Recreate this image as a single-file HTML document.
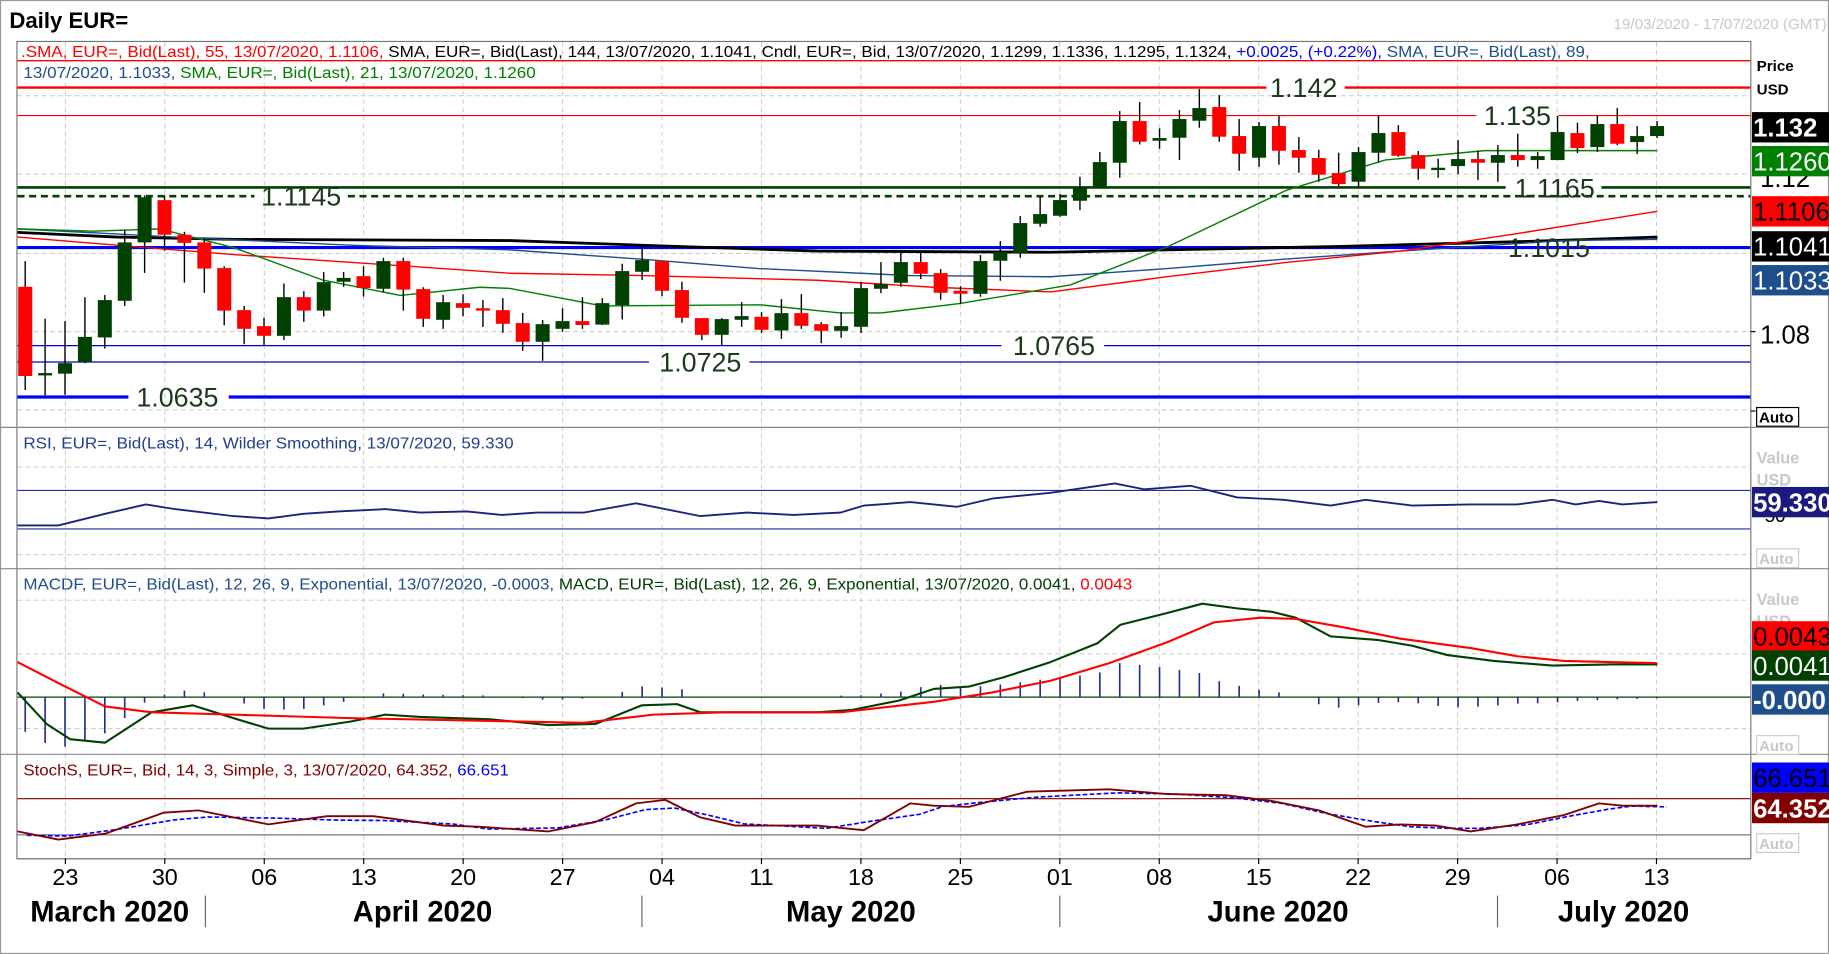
<!DOCTYPE html>
<html><head><meta charset="utf-8"><style>
html,body{margin:0;padding:0;background:#fff;overflow:hidden}
svg{display:block}
text{font-family:"Liberation Sans",sans-serif}
</style></head><body>
<svg id="s" width="1829" height="954" viewBox="0 0 1567 817" preserveAspectRatio="none" xmlns="http://www.w3.org/2000/svg">
<rect x="0" y="0" width="1567" height="817" fill="#fff"/>
<rect x="0.5" y="0.5" width="1566" height="816" fill="none" stroke="#9a9a9a"/>
<text x="8" y="24" font-size="19" font-weight="bold">Daily EUR=</text>
<text x="1565" y="25" font-size="13" fill="#c8c8c8" text-anchor="end">19/03/2020 - 17/07/2020 (GMT)</text>
<g id="grid"></g>
<g id="hl"></g>
<g id="ma"></g>
<g id="candles"></g>
<g id="lbl"></g>
<text x="18" y="49" font-size="13.5" textLength="1344" lengthAdjust="spacingAndGlyphs"><tspan fill="#ff0000">.SMA, EUR=, Bid(Last),  55, 13/07/2020, 1.1106, </tspan><tspan fill="#000">SMA, EUR=, Bid(Last),  144, 13/07/2020, 1.1041, Cndl, EUR=, Bid, 13/07/2020, 1.1299, 1.1336, 1.1295, 1.1324, </tspan><tspan fill="#0000ff">+0.0025, (+0.22%), </tspan><tspan fill="#1f4e8c">SMA, EUR=, Bid(Last),  89,</tspan></text>
<text x="20" y="67" font-size="13.5" textLength="439" lengthAdjust="spacingAndGlyphs"><tspan fill="#1f4e8c">13/07/2020, 1.1033, </tspan><tspan fill="#008000">SMA, EUR=, Bid(Last),  21, 13/07/2020, 1.1260</tspan></text>
<text x="20" y="384" font-size="13.5" fill="#1f3f8c" textLength="420" lengthAdjust="spacingAndGlyphs">RSI, EUR=, Bid(Last),  14, Wilder Smoothing, 13/07/2020, 59.330</text>
<text x="20" y="505" font-size="13.5" textLength="950" lengthAdjust="spacingAndGlyphs"><tspan fill="#1f4e8c">MACDF, EUR=, Bid(Last),  12, 26, 9, Exponential, 13/07/2020, -0.0003, </tspan><tspan fill="#004000">MACD, EUR=, Bid(Last),  12, 26, 9, Exponential, 13/07/2020, 0.0041, </tspan><tspan fill="#ff0000">0.0043</tspan></text>
<text x="20" y="664" font-size="13.5" textLength="416" lengthAdjust="spacingAndGlyphs"><tspan fill="#800000">StochS, EUR=, Bid,  14, 3, Simple, 3, 13/07/2020, 64.352, </tspan><tspan fill="#0000ff">66.651</tspan></text>
<g id="frame"></g>
<g id="axis"></g>
</svg>
<script>
var NS="http://www.w3.org/2000/svg";
function el(p,t,a,txt){var e=document.createElementNS(NS,t);for(var k in a)e.setAttribute(k,a[k]);if(txt!==undefined)e.textContent=txt;document.getElementById(p).appendChild(e);return e;}
function line(p,x1,y1,x2,y2,c,w,d){var a={x1:x1,y1:y1,x2:x2,y2:y2,stroke:c,"stroke-width":w};if(d)a["stroke-dasharray"]=d;return el(p,"line",a);}
function poly(p,pts,c,w,d){var a={points:pts.map(function(q){return q.join(",")}).join(" "),fill:"none",stroke:c,"stroke-width":w,"stroke-linejoin":"round"};if(d)a["stroke-dasharray"]=d;el(p,"polyline",a);}
function interp(pts,x){if(x<=pts[0][0])return pts[0][1];for(var i=1;i<pts.length;i++){if(x<=pts[i][0]){var a=pts[i-1],b=pts[i];return a[1]+(b[1]-a[1])*(x-a[0])/(b[0]-a[0]);}}return pts[pts.length-1][1];}
var L=15,R=1500;
var gx=[];for(var i=0;i<17;i++)gx.push(56+85.2*i);
gx.forEach(function(x){line("grid",x,36,x,735,"#c8c8c8",0.8,"4,3");});
[82,149,217,284,351].forEach(function(y){line("grid",L,y,R,y,"#c8c8c8",0.8,"4,3");});
[400,475].forEach(function(y){line("grid",L,y,R,y,"#c8c8c8",0.8,"4,3");});
[514,560,624].forEach(function(y){line("grid",L,y,R,y,"#c8c8c8",0.8,"4,3");});
line("hl",L,52,R,52,"#ff0000",1.2);
line("hl",L,75,1085,75,"#ff0000",2);line("hl",1152,75,R,75,"#ff0000",2);
line("hl",L,99,1265,99,"#ff0000",1);line("hl",1335,99,R,99,"#ff0000",1);
line("hl",L,160.5,1290,160.5,"#004000",2.2);line("hl",1372,160.5,R,160.5,"#004000",2.2);
line("hl",L,168,218,168,"#004000",2.2,"6,4");line("hl",298,168,R,168,"#004000",2.2,"6,4");
line("hl",L,212,R,212,"#0000ff",2.6);
line("hl",L,296,858,296,"#0000cc",1.1);line("hl",946,296,R,296,"#0000cc",1.1);
line("hl",L,310,556,310,"#0000cc",1.1);line("hl",642,310,R,310,"#0000cc",1.1);
line("hl",L,340,110,340,"#0000ff",2.8);line("hl",196,340,R,340,"#0000ff",2.8);
var black=[[15,199],[100,203],[200,205],[437,206],[550,210],[700,215],[900,216],[1000,214],[1150,211],[1300,207],[1420,203]];
var blue=[[15,196],[150,203],[300,210],[437,214],[550,222],[650,230],[780,236],[900,237],[1000,230],[1100,222],[1200,215],[1340,206],[1420,205]];
var red=[[15,203],[100,210],[200,218],[350,228],[437,234],[550,236],[700,240],[800,246],[900,250],[1000,237],[1100,225],[1200,215],[1300,200],[1420,181]];
var green=[[15,196],[80,198],[137,196],[200,212],[277,240],[343,253],[411,246],[437,247],[516,262],[651,261],[720,268],[755,268],[822,260],[917,244],[1001,211],[1102,163],[1187,137],[1272,129],[1420,129]];
poly("ma",black,"#000",2.4);poly("ma",blue,"#1f4e8c",1.2);poly("ma",red,"#ff0000",1.2);poly("ma",green,"#008000",1.2);
var A=[[245.6,322,223.6,334,0],[319.5,321,273,338.5,1],[311,320,275,338,1],[288.5,310,254.5,311,1],[257,289,252.6,298.5,1],[207.6,257.6,197,262,1],[169,207.6,167.5,233.7,1],[171.4,201,167.5,214.8,0],[201,208,198.5,242,0],[207.6,230,204,250.8,0],[229.6,266,228,278.5,0],[265.6,281.6,262,294.7,0],[279.3,287.6,272,295.6,0],[254.5,287.6,242.8,291.3,1],[254.5,266,249.3,275.6,0],[241.6,266,233,271,1],[238,241.3,233,245.6,1],[236.5,246.6,228,254,0],[223.6,247.3,220.8,250,1],[223.6,248,220.8,266,0],[247.6,273,246,280,0],[258.8,273.9,252.6,281.6,1],[259.6,263.6,252,271,0],[264,266,257,280,0],[265.6,277.3,255.3,285,0],[276.7,292.7,268,300.5,0],[277.6,292.7,274,309,1],[275,281.6,264,284,1],[275,278.3,254.5,281.6,0],[259.6,278,255.3,278.4,1]];
var Z4=[[273,375,251,418,1],[240,275,203,300,1],[243,332,243,348,0],[330,413,305,428,0],[414,464,414,480,0],[417,464,414,495,1],[408,419,366,440,1],[410,449,396,459,0],[399,451,357,476,1],[399,437,342,446,0],[432,452,426,489,0],[438,452,396,473,1],[324,440,306,459,1],[312,326,246,339,1],[246,308,216,320,1],[246,281,212,297,0],[279,338,267,359,0],[332,341,318,371,0],[243,341,225,350,1],[216,242,183,302,1],[129,219,108,233,1],[102,131,50,140,1],[60,107,42,110,1]];
Z4.forEach(function(c){A.push([c[0]*0.2856+154.2,c[1]*0.2856+154.2,c[2]*0.2856+154.2,c[3]*0.2856+154.2,c[4]]);});
var Z5=[[325,362,290,390,1],[246,325,216,325,1],[123,248,93,293,1],[123,185,66,193,0],[174,182,145,206,1],[117,173,90,240,1],[84,122,27,143,1],[81,170,45,185,0],[168,221,117,272,0],[138,233,126,260,1],[138,212,108,254,0],[210,233,171,278,0],[234,284,209,305,0],[279,312,218,318,0],[216,305,201,321,1],[159,218,107,248,1],[156,227,135,230,0],[225,266,213,299,0],[263,266,236,293,1],[237,258,180,282,1],[237,248,212,300,0],[225,248,195,305,1],[225,240,161,260,0],[228,240,216,266,1],[156,240,108,240,1],[159,204,128,219,0],[132,201,105,216,1],[132,191,84,195,0],[168,186,138,222,1],[138,168,123,174,1]];
Z5.forEach(function(c){A.push([c[0]*0.2856+68.54,c[1]*0.2856+68.54,c[2]*0.2856+68.54,c[3]*0.2856+68.54,c[4]]);});
var CX=[];
A.forEach(function(c,k){var x=21.6+17.05*k;CX.push(x);var col=c[4]?"#004000":"#ff0000";
line("candles",x,c[2],x,c[3],"#000",1.2);
var h=Math.max(c[1]-c[0],2);el("candles","rect",{x:x-6,y:c[0],width:12,height:h,fill:col});});
function lab(x,y,t){el("lbl","text",{x:x,y:y+8,"font-size":23,fill:"#1a3a1a","text-anchor":"middle"},t);}
lab(1117,75,"1.142");lab(1300,99,"1.135");lab(258,168,"1.1145");lab(1332,161,"1.1165");lab(1327,212,"1.1015");lab(903,296,"1.0765");lab(600,310,"1.0725");lab(152,340,"1.0635");
line("hl",L,420,R,420,"#1f2f9c",1);line("hl",L,453,R,453,"#1f2f9c",1);
var rsi=[[15,450],[50,450],[90,440],[125,432],[150,436],[200,442],[230,444],[260,440],[290,438],[330,436],[360,439],[400,438],[430,441],[460,439],[500,439],[545,431],[600,442],[640,439],[680,441],[720,439],[740,433],[780,430],[820,434],[850,427],[900,422],[955,414],[980,419],[1020,416],[1060,426],[1100,428],[1140,433],[1170,428],[1210,433],[1260,432],[1300,432],[1330,428],[1350,432],[1370,429],[1390,432],[1420,430]];
poly("ma",rsi,"#1a237e",1.6);
var mg=[[15,593],[40,620],[60,633],[90,636],[130,610],[165,604],[200,615],[230,624],[260,624],[300,618],[330,612],[360,614],[420,616],[470,621],[510,620],[550,604],[580,603],[600,610],[700,610],[730,608],[770,600],[800,590],[830,588],[860,580],[900,567],[940,551],[960,535],[1000,525],[1030,517],[1060,521],[1090,524],[1110,529],[1140,545],[1180,548],[1210,553],[1240,561],[1280,566],[1330,570],[1380,569],[1420,569]];
var mr=[[15,567],[50,585],[90,605],[130,610],[200,612],[300,615],[400,617],[500,619],[560,612],[620,610],[720,610],[800,601],[850,593],[900,583],[950,568],[1000,550],[1040,533],[1080,529],[1110,530],[1150,537],[1200,547],[1260,555],[1300,562],[1340,566],[1420,568]];
line("hl",L,597,R,597,"#004000",1);
CX.forEach(function(x){var v=597+(interp(mg,x)-interp(mr,x));v=Math.max(v,560);if(Math.abs(v-597)>0.8)line("ma",x,597,x,v,"#1f2f8c",1.4);});
poly("ma",mg,"#004000",1.8);poly("ma",mr,"#ff0000",1.8);
line("hl",L,684,R,684,"#800000",1);line("hl",L,715,R,715,"#555",0.8);
var st=[[15,712],[50,719],[90,714],[140,696],[170,694],[230,706],[280,699],[320,699],[380,707],[410,708],[470,712],[510,704],[545,688],[570,685],[600,700],[630,707],[700,707],[740,711],[780,688],[800,690],[830,691],[880,678],[950,676],[1000,680],[1050,681],[1090,686],[1130,694],[1170,708],[1200,706],[1230,707],[1260,712],[1300,706],[1340,698],[1370,688],[1390,690],[1420,690]];
var sd=st.map(function(p,i){var a=st[Math.max(0,i-1)][1],b=p[1],c=st[Math.min(st.length-1,i+1)][1];return[p[0]+8,(a+b+c)/3+1];});
poly("ma",sd,"#0000ff",1.4,"4,2");poly("ma",st,"#800000",1.6);
el("frame","rect",{x:14.5,y:35.5,width:1485.5,height:700,fill:"none",stroke:"#777","stroke-width":1});
[366,487,646].forEach(function(y){line("frame",0,y,1567,y,"#888",1);});
line("frame",L,735.5,1500,735.5,"#777",1);
function box(y,bg,fg,t,b){el("axis","rect",{x:1501,y:y-13,width:66,height:26,fill:bg});el("axis","text",{x:1502,y:y+8,"font-size":22,fill:fg,"font-weight":b?"bold":"normal"},t);}
el("axis","text",{x:1505,y:61,"font-size":13,"font-weight":"bold"},"Price");
el("axis","text",{x:1505,y:81,"font-size":13,"font-weight":"bold"},"USD");
el("axis","text",{x:1508,y:160,"font-size":22},"1.12");
box(109,"#000","#fff","1.132",true);box(138,"#008000","#fff","1.1260");box(181,"#ff0000","#000","1.1106");box(211,"#000","#fff","1.1041");box(240,"#1f4e8c","#fff","1.1033");
line("axis",1500,284,1504,284,"#000",1);
el("axis","text",{x:1508,y:294,"font-size":22},"1.08");
line("axis",1500,352,1504,352,"#000",1);
el("axis","rect",{x:1505,y:349,width:36,height:16,fill:"#fff",stroke:"#000"});
el("axis","text",{x:1507,y:362,"font-size":13,"font-weight":"bold"},"Auto");
el("axis","text",{x:1505,y:397,"font-size":14,fill:"#c8c8c8","font-weight":"bold"},"Value");
el("axis","text",{x:1505,y:416,"font-size":14,fill:"#c8c8c8","font-weight":"bold"},"USD");
el("axis","text",{x:1512,y:447,"font-size":16},"50");
box(430,"#1a1a80","#fff","59.330",true);
el("axis","rect",{x:1505,y:470,width:36,height:16,fill:"#fff",stroke:"#ccc"});
el("axis","text",{x:1507,y:483,"font-size":13,fill:"#c8c8c8","font-weight":"bold"},"Auto");
el("axis","text",{x:1505,y:518,"font-size":14,fill:"#c8c8c8","font-weight":"bold"},"Value");
el("axis","text",{x:1505,y:537,"font-size":14,fill:"#c8c8c8","font-weight":"bold"},"USD");
box(545,"#ff0000","#000","0.0043");box(570,"#004000","#fff","0.0041");box(599,"#1f4e8c","#fff","-0.000",true);
el("axis","rect",{x:1505,y:630,width:36,height:16,fill:"#fff",stroke:"#ccc"});
el("axis","text",{x:1507,y:643,"font-size":13,fill:"#c8c8c8","font-weight":"bold"},"Auto");
box(666,"#0000ff","#000","66.651");box(692,"#800000","#fff","64.352",true);
el("axis","rect",{x:1505,y:714,width:36,height:16,fill:"#fff",stroke:"#ccc"});
el("axis","text",{x:1507,y:727,"font-size":13,fill:"#c8c8c8","font-weight":"bold"},"Auto");
var dl=["23","30","06","13","20","27","04","11","18","25","01","08","15","22","29","06","13"];
dl.forEach(function(d,i){var x=56+85.2*i;line("axis",x,735,x,740,"#000",1);el("axis","text",{x:x,y:758,"font-size":20,"text-anchor":"middle"},d);});
[["March 2020",94],["April 2020",362],["May 2020",729],["June 2020",1095],["July 2020",1391]].forEach(function(m){el("axis","text",{x:m[1],y:789,"font-size":25,"font-weight":"bold","text-anchor":"middle"},m[0]);});
[176,550,908,1283].forEach(function(x){line("axis",x,767,x,794,"#666",1);});
</script>
</body></html>
